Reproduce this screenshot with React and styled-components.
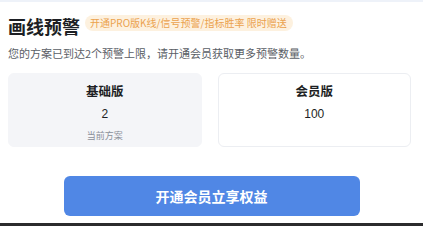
import styled, { createGlobalStyle } from "styled-components";

const GlobalStyle = createGlobalStyle`
  html, body {
    margin: 0;
    padding: 0;
    background: #fff;
  }
  body {
    font-family: "Noto Sans CJK SC", "Liberation Sans", sans-serif;
  }
`;

// dialog-shell
const Panel = styled.div`
  width: 423px;
  height: 226px;
  box-sizing: border-box;
  border-top: 2px solid #eef2f9;
  display: flex;
  flex-direction: column;
  overflow: hidden;
`;

const Body = styled.div`
  padding: 12px 12px 0 8px;
  display: flex;
  flex-direction: column;
  flex: 1;
`;

// title-row
const TitleRow = styled.div`
  display: flex;
  align-items: flex-start;
  gap: 5px;
  height: 25px;
`;

const Title = styled.h1`
  margin: 0;
  font-size: 18px;
  line-height: 25px;
  font-weight: 700;
  color: #1d1f24;
`;

const PromoBadge = styled.span`
  margin-top: 1px;
  background: #fdf1df;
  color: #eba24e;
  font-size: 10px;
  line-height: 16px;
  padding: 0 6px 0 5px;
  border-radius: 8px;
  white-space: nowrap;
`;

const Notice = styled.p`
  margin: 5px 0 0 0;
  font-size: 11px;
  line-height: 18px;
  color: #5a5e66;
  white-space: nowrap;
`;

// plan-cards-row
const PlanRow = styled.div`
  display: grid;
  grid-template-columns: 1fr 1fr;
  gap: 16px;
  margin-top: 11px;
`;

const PlanCard = styled.div`
  height: 74px;
  box-sizing: border-box;
  border-radius: 6px;
  background: ${(p) => (p.$current ? "#f4f5f8" : "#fff")};
  border: 1px solid ${(p) => (p.$current ? "#f4f5f8" : "#eceef2")};
  display: flex;
  flex-direction: column;
  align-items: center;
  padding-top: 8px;
  .plan-name {
    font-size: 12.5px;
    font-weight: 700;
    color: #1d1f24;
    line-height: 18px;
  }
  .plan-limit {
    margin-top: 5px;
    font-size: 12px;
    color: #1d1f24;
    line-height: 18px;
    font-family: "Liberation Sans", sans-serif;
  }
  .plan-tag {
    margin-top: 6px;
    font-size: 9px;
    color: #8a8f99;
    line-height: 13px;
  }
`;

const Footer = styled.div`
  display: flex;
  justify-content: center;
  margin-top: 29px;
  padding-left: 4px;
`;

const UpgradeButton = styled.button`
  width: 296px;
  height: 40px;
  border: none;
  border-radius: 6px;
  background: #5087e5;
  color: #fff;
  font-family: "Noto Sans CJK SC", sans-serif;
  font-size: 14px;
  font-weight: 700;
  cursor: pointer;
`;

const BottomStrip = styled.div`
  height: 3px;
  background: #2b2b2d;
`;

const plans = [
  { id: "basic", name: "基础版", limit: 2, current: true },
  { id: "vip", name: "会员版", limit: 100, current: false },
];

export default function App() {
  return (
    <>
      <GlobalStyle />
      <Panel>
        <Body>
          <TitleRow>
            <Title>画线预警</Title>
            <PromoBadge>开通PRO版K线/信号预警/指标胜率 限时赠送</PromoBadge>
          </TitleRow>
          <Notice>您的方案已到达2个预警上限，请开通会员获取更多预警数量。</Notice>
          <PlanRow>
            {plans.map((plan) => (
              <PlanCard key={plan.id} $current={plan.current}>
                <span className="plan-name">{plan.name}</span>
                <span className="plan-limit">{plan.limit}</span>
                {plan.current && <span className="plan-tag">当前方案</span>}
              </PlanCard>
            ))}
          </PlanRow>
          <Footer>
            <UpgradeButton>开通会员立享权益</UpgradeButton>
          </Footer>
        </Body>
        <BottomStrip />
      </Panel>
    </>
  );
}
